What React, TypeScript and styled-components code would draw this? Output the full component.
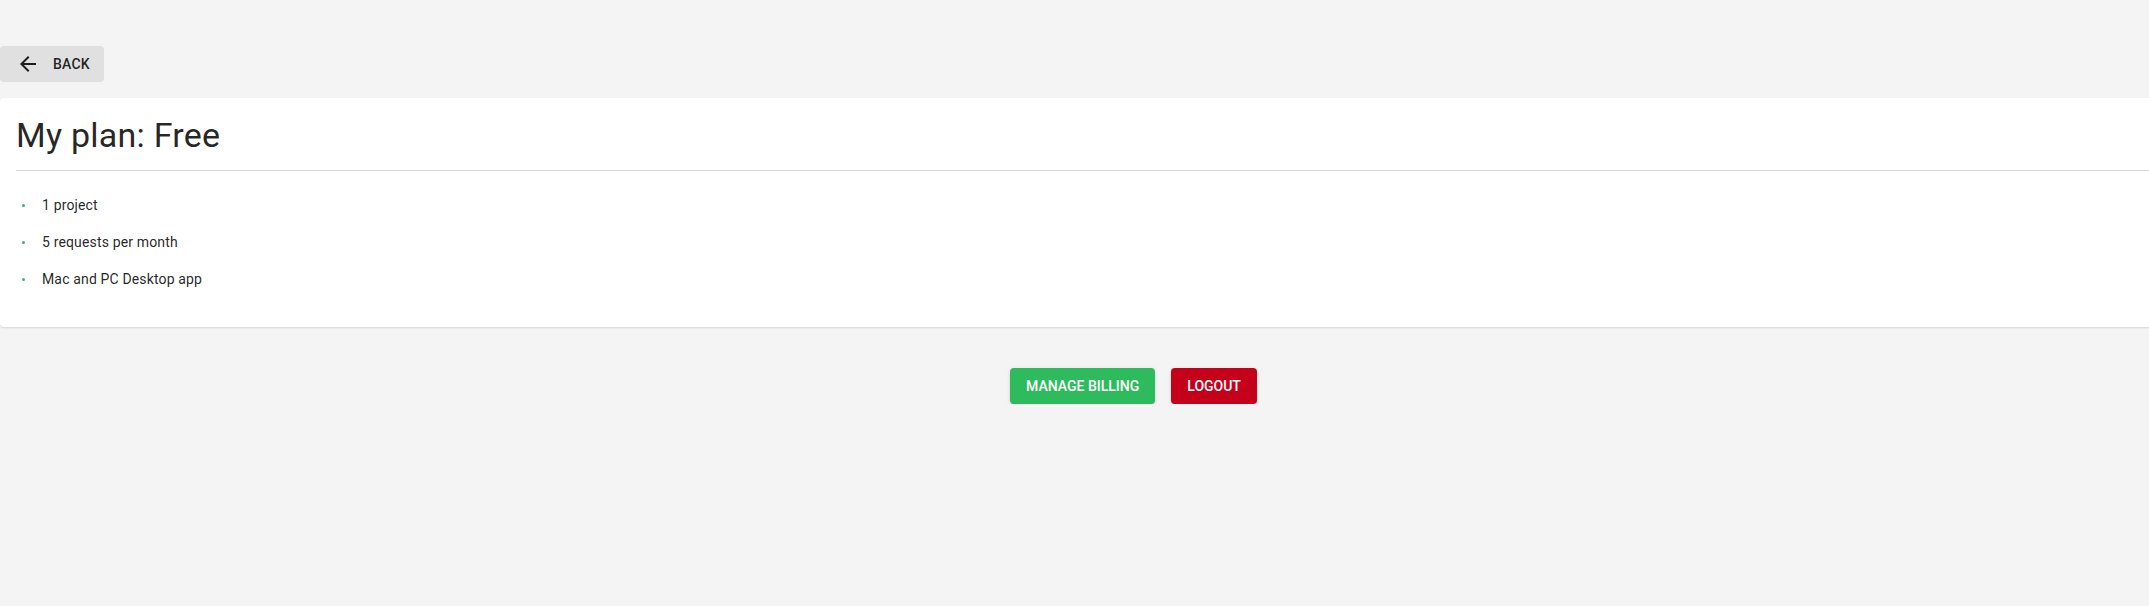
import React from "react";
import styled, { createGlobalStyle } from "styled-components";

const Global = createGlobalStyle`
  html, body {
    margin: 0;
    padding: 0;
    background: #f4f4f4;
    font-family: Roboto, "Liberation Sans", Arial, sans-serif;
    color: rgba(0, 0, 0, 0.87);
    overflow-x: hidden;
  }
  * { box-sizing: border-box; }
`;

const Page = styled.div`
  padding-top: 46px;
  display: flex;
  flex-direction: column;
  align-items: flex-start;
`;

const BackButton = styled.button`
  display: inline-flex;
  align-items: center;
  gap: 13px;
  height: 36px;
  width: 104px;
  padding: 0 14px 0 16px;
  border: none;
  border-radius: 4px;
  background: #e0e0e0;
  color: rgba(0, 0, 0, 0.87);
  font-family: Roboto, "Liberation Sans", sans-serif;
  font-size: 14px;
  font-weight: 500;
  letter-spacing: 0.2px;
  text-transform: uppercase;
  cursor: pointer;
  svg { flex: none; }
`;

const Card = styled.section`
  margin-top: 16px;
  width: calc(100% + 8px);
  background: #fff;
  border-radius: 4px;
  box-shadow: 0px 1px 3px 0px rgba(0,0,0,0.08), 0px 1px 1px 0px rgba(0,0,0,0.05);
`;

const Title = styled.h1`
  margin: 0;
  padding: 16px 16px 14px;
  font-size: 34px;
  font-weight: 400;
  line-height: 42px;
  letter-spacing: 0.25px;
  color: rgba(0, 0, 0, 0.87);
`;

const Divider = styled.hr`
  margin: 0 0 0 16px;
  border: none;
  border-top: 1px solid rgba(0, 0, 0, 0.15);
`;

const List = styled.ul`
  list-style: none;
  margin: 0;
  padding: 16px 0 29px;
`;

const Item = styled.li`
  display: flex;
  align-items: center;
  gap: 17px;
  padding: 8px 22px;
  font-size: 14px;
  line-height: 21px;
  letter-spacing: 0.15px;
`;

const Bullet = styled.span`
  width: 3px;
  height: 3px;
  border-radius: 50%;
  background: #3fae8a;
  flex: none;
`;

const Actions = styled.div`
  align-self: stretch;
  display: flex;
  justify-content: center;
  gap: 16px;
  margin-top: 41px;
  padding-left: 118px;
`;

const ActionButton = styled.button<{ $bg: string }>`
  height: 36px;
  padding: 0 16px;
  border: none;
  border-radius: 4px;
  background: ${(p) => p.$bg};
  color: #fff;
  font-family: Roboto, "Liberation Sans", sans-serif;
  font-size: 14px;
  font-weight: 500;
  letter-spacing: 0;
  text-transform: uppercase;
  box-shadow: 0px 2px 3px -1px rgba(0,0,0,0.18), 0px 1px 4px 0px rgba(0,0,0,0.1);
  cursor: pointer;
`;

const features = ["1 project", "5 requests per month", "Mac and PC Desktop app"];

export default function App() {
  return (
    <>
      <Global />
      <Page>
        <BackButton>
          <svg width="24" height="24" viewBox="0 0 24 24" fill="currentColor">
            <path d="M20 11H7.83l5.59-5.59L12 4l-8 8 8 8 1.41-1.41L7.83 13H20v-2z" />
          </svg>
          Back
        </BackButton>
        <Card>
          <Title>My plan: Free</Title>
          <Divider />
          <List>
            {features.map((f) => (
              <Item key={f}>
                <Bullet />
                {f}
              </Item>
            ))}
          </List>
        </Card>
        <Actions>
          <ActionButton $bg="#2dbb5d">Manage billing</ActionButton>
          <ActionButton $bg="#c4001a">Logout</ActionButton>
        </Actions>
      </Page>
    </>
  );
}
